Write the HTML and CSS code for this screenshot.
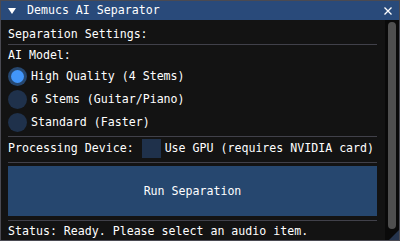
FILE: index.html
```html
<html>
<head>
    <title>Demucs AI Separator</title>
    <link rel="stylesheet" href="styles.css">
</head>
<body>
    <div class="window">
        <div class="titlebar">
            <span class="collapse"></span>
            <span class="title">Demucs AI Separator</span>
            <svg class="close" width="8" height="8" viewBox="0 0 8 8">
                <path d="M0.5 0.5 L7.5 7.5 M7.5 0.5 L0.5 7.5" stroke="#fff" stroke-width="1.3" fill="none"/>
            </svg>
        </div>
        <div class="body">
            <div class="content">
                <div class="text heading">Separation Settings:</div>
                <div class="separator sep-top"></div>
                <div class="text model-label">AI Model:</div>
                <div class="radio-row first">
                    <span class="radio checked"><span class="dot"></span></span>
                    <span class="text">High Quality (4 Stems)</span>
                </div>
                <div class="radio-row">
                    <span class="radio"></span>
                    <span class="text">6 Stems (Guitar/Piano)</span>
                </div>
                <div class="radio-row">
                    <span class="radio"></span>
                    <span class="text">Standard (Faster)</span>
                </div>
                <div class="separator"></div>
                <div class="device-row">
                    <span class="text">Processing Device:</span>
                    <span class="checkbox"></span>
                    <span class="text">Use GPU (requires NVIDIA card)</span>
                </div>
                <div class="separator"></div>
                <div class="button">Run Separation</div>
                <div class="separator"></div>
                <div class="text status">Status: Ready. Please select an audio item.</div>
            </div>
            <div class="scrollbar"><div class="grab"></div></div>
        </div>
        <div class="grip"></div>
    </div>
</body>
</html>
```

FILE: styles.css
```css
body { margin: 0; background: #131313; font-family: "DejaVu Sans Mono", monospace; font-size: 11.6px; color: #fff; }
.window { position: relative; width: 400px; height: 241px; box-sizing: border-box; border: 1px solid #4a4a52; background: #131313; overflow: hidden; }
.titlebar { display: flex; align-items: center; height: 19px; background: #294a7a; padding: 0 7px 0 7px; }
.collapse { width: 0; height: 0; border-left: 4px solid transparent; border-right: 4px solid transparent; border-top: 6px solid #fff; }
.title { margin-left: 11px; line-height: 13px; }
.close { margin-left: auto; }
.body { display: flex; height: 220px; }
.content { flex: 1; display: flex; flex-direction: column; padding: 8px 8px 0 7px; }
.text { line-height: 13px; height: 13px; white-space: nowrap; }
.separator { height: 1px; background: #41414a; margin-top: 4px; }
.sep-top { margin-top: 3px; }
.model-label { margin-top: 4px; }
.radio-row { display: flex; align-items: center; gap: 4px; height: 19px; margin-top: 4px; }
.radio-row.first { margin-top: 5px; }
.radio { width: 19px; height: 19px; border-radius: 50%; background: #1f314b; display: flex; align-items: center; justify-content: center; }
.radio.checked { background: #26476f; }
.dot { width: 13px; height: 13px; border-radius: 50%; background: #4296fa; }
.device-row { display: flex; align-items: center; height: 19px; margin-top: 2px; }
.checkbox { width: 19px; height: 19px; background: #1f314b; margin: 0 4px 0 8px; }
.button { height: 50px; margin-top: 3px; background: #26476f; display: flex; align-items: center; justify-content: center; line-height: 13px; }
.status { margin-top: 4px; }
.scrollbar { width: 14px; background: #0a0a0a; padding: 2px 3px 0 3px; box-sizing: border-box; }
.grab { height: 207px; background: #4f4f4f; border-radius: 5px; }
.grip { position: absolute; right: 0; bottom: 0; width: 10px; height: 10px; background: #25344d; clip-path: polygon(100% 0, 100% 100%, 0 100%); }
```
